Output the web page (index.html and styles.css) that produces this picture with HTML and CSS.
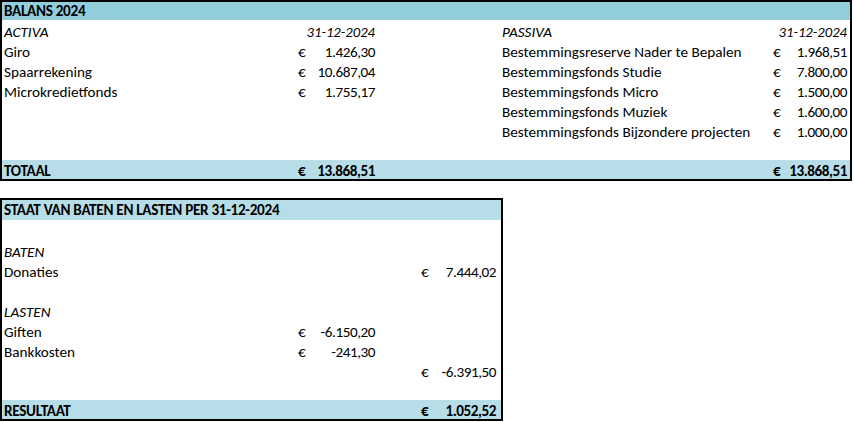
FILE: index.html
```html
<!DOCTYPE html>
<html lang="nl">
<head>
<meta charset="utf-8">
<title>Balans 2024</title>
<link rel="stylesheet" href="styles.css">
</head>
<body>
<section class="sheet balans">
  <div class="band head"><span class="lbl">BALANS 2024</span></div>
  <div class="row">
    <span class="lbl it">ACTIVA</span>
    <span class="money it"><span></span><span class="d">31-12-2024</span></span>
    <span></span>
    <span class="lbl it">PASSIVA</span>
    <span class="money it"><span></span><span class="d">31-12-2024</span></span>
  </div>
  <div class="row">
    <span class="lbl">Giro</span>
    <span class="money"><span>€</span><span class="n">1.426,30</span></span>
    <span></span>
    <span class="lbl">Bestemmingsreserve Nader te Bepalen</span>
    <span class="money"><span>€</span><span class="n">1.968,51</span></span>
  </div>
  <div class="row">
    <span class="lbl">Spaarrekening</span>
    <span class="money"><span>€</span><span class="n">10.687,04</span></span>
    <span></span>
    <span class="lbl">Bestemmingsfonds Studie</span>
    <span class="money"><span>€</span><span class="n">7.800,00</span></span>
  </div>
  <div class="row">
    <span class="lbl">Microkredietfonds</span>
    <span class="money"><span>€</span><span class="n">1.755,17</span></span>
    <span></span>
    <span class="lbl">Bestemmingsfonds Micro</span>
    <span class="money"><span>€</span><span class="n">1.500,00</span></span>
  </div>
  <div class="row">
    <span class="lbl"></span>
    <span></span>
    <span></span>
    <span class="lbl">Bestemmingsfonds Muziek</span>
    <span class="money"><span>€</span><span class="n">1.600,00</span></span>
  </div>
  <div class="row">
    <span class="lbl"></span>
    <span></span>
    <span></span>
    <span class="lbl">Bestemmingsfonds Bijzondere projecten</span>
    <span class="money"><span>€</span><span class="n">1.000,00</span></span>
  </div>
  <div class="row"></div>
  <div class="row band total">
    <span class="lbl">TOTAAL</span>
    <span class="money"><span>€</span><span class="n">13.868,51</span></span>
    <span></span>
    <span class="lbl"></span>
    <span class="money"><span>€</span><span class="n">13.868,51</span></span>
  </div>
</section>

<section class="sheet staat">
  <div class="band head light"><span class="lbl">STAAT VAN BATEN EN LASTEN PER 31-12-2024</span></div>
  <div class="row"></div>
  <div class="row"><span class="lbl it">BATEN</span></div>
  <div class="row">
    <span class="lbl">Donaties</span>
    <span></span>
    <span></span>
    <span class="money"><span>€</span><span class="n">7.444,02</span></span>
  </div>
  <div class="row"></div>
  <div class="row"><span class="lbl it">LASTEN</span></div>
  <div class="row">
    <span class="lbl">Giften</span>
    <span class="money"><span>€</span><span class="n">-6.150,20</span></span>
  </div>
  <div class="row">
    <span class="lbl">Bankkosten</span>
    <span class="money"><span>€</span><span class="n">-241,30</span></span>
  </div>
  <div class="row">
    <span class="lbl"></span>
    <span></span>
    <span></span>
    <span class="money"><span>€</span><span class="n">-6.391,50</span></span>
  </div>
  <div class="row"></div>
  <div class="row band total">
    <span class="lbl">RESULTAAT</span>
    <span></span>
    <span></span>
    <span class="money"><span>€</span><span class="n">1.052,52</span></span>
  </div>
</section>
</body>
</html>
```

FILE: styles.css
```css
* { box-sizing: border-box; }

body {
  margin: 0;
  background: #fff;
  color: #000;
  font-family: Carlito, Calibri, Lato, "Liberation Sans", sans-serif;
  font-size: 15.2px;
  line-height: 20px;
}

.sheet {
  border: 2px solid #000;
  display: flex;
  flex-direction: column;
}

.balans { width: 852px; }
.staat { width: 503px; margin-top: 17px; }

.row {
  display: grid;
  height: 20px;
  padding-top: 2px;
  white-space: nowrap;
}

.balans .row { grid-template-columns: 293px 82px 123px 270px 80px; }
.staat .row { grid-template-columns: 293px 82px 41px 83px; }

.band { font-weight: bold; }
.band .lbl { letter-spacing: -0.3px; }

.head {
  height: 18px;
  line-height: 18px;
  background: #92cddc;
}
.staat .head {
  height: 20px;
  line-height: 21px;
  background: #b7dee8;
}

.total {
  height: 19px;
  line-height: 19px;
  background: #b7dee8;
}

.lbl { padding-left: 2px; overflow: hidden; }
.it { font-style: italic; }

.n { letter-spacing: -0.45px; }
.d { font-size: 14.67px; }

.money {
  display: flex;
  justify-content: space-between;
  padding: 0 2px 0 3px;
}
.balans .row > .money:last-child { padding-right: 3px; }
.staat .row > .money:nth-child(4) { padding-right: 5px; }
```
